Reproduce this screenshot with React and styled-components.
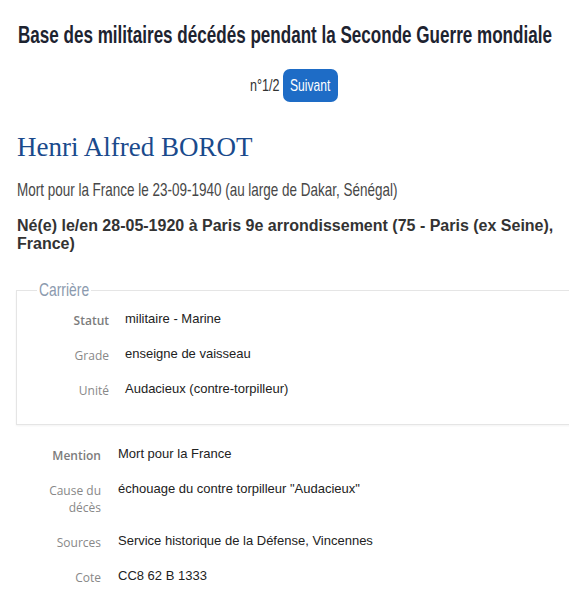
import React, { useLayoutEffect, useRef, useState } from "react";
import styled, { createGlobalStyle } from "styled-components";

const GlobalStyle = createGlobalStyle`
  html, body {
    margin: 0;
    padding: 0;
    background: #ffffff;
    overflow: hidden;
  }
  body {
    font-family: "Liberation Sans", Arial, sans-serif;
    color: #222;
  }
`;

// no condensed face is installed, so narrow Arial-metric text horizontally
const SqueezeBox = styled.span`
  display: inline-block;
  white-space: nowrap;
  vertical-align: top;
`;

const SqueezeInner = styled.span`
  display: inline-block;
  transform: scaleX(${(p) => p.$scale});
  transform-origin: left center;
`;

const Squeeze = ({ scale = 0.71, children }) => {
  const ref = useRef(null);
  const [width, setWidth] = useState();

  useLayoutEffect(() => {
    if (ref.current) setWidth(ref.current.offsetWidth * scale);
  }, [scale, children]);

  return (
    <SqueezeBox style={{ width }}>
      <SqueezeInner ref={ref} $scale={scale}>
        {children}
      </SqueezeInner>
    </SqueezeBox>
  );
};

const Page = styled.main`
  width: 569px;
  height: 601px;
  padding: 0 0 0 17px;
  box-sizing: border-box;
  display: flex;
  flex-direction: column;
`;

const Title = styled.h1`
  margin: 20px 0 0 -17px;
  font-family: "Liberation Sans", Arial, sans-serif;
  font-size: 24px;
  font-weight: 700;
  color: #1d2330;
  line-height: 30px;
  text-align: center;
`;

const Pager = styled.div`
  display: flex;
  justify-content: center;
  align-items: center;
  gap: 3px;
  margin-top: 19px;
  padding-left: 2px;
`;

const PagerText = styled.span`
  font-family: "Liberation Sans", Arial, sans-serif;
  font-size: 17px;
  color: #333;
`;

const NextButton = styled.button`
  display: flex;
  justify-content: center;
  align-items: center;
  border: none;
  background: #1e6cc6;
  color: #fff;
  border-radius: 7px;
  width: 55px;
  height: 33px;
  padding: 0;
  font-family: "Liberation Sans", Arial, sans-serif;
  font-size: 17px;
`;

const Name = styled.h2`
  margin: 29px 0 0 0;
  font-family: "Liberation Serif", "DejaVu Serif", serif;
  font-weight: 400;
  font-size: 27px;
  line-height: 32px;
  color: #1a4a8c;
`;

const Subtitle = styled.p`
  margin: 16px 0 0 0;
  font-family: "Liberation Sans", Arial, sans-serif;
  font-size: 19px;
  line-height: 22px;
  color: #474747;
`;

const Birth = styled.p`
  margin: 16px 0 0 0;
  font-family: "Liberation Sans", Arial, sans-serif;
  font-weight: 700;
  font-size: 16px;
  line-height: 18px;
  color: #333;
  padding-right: 10px;
`;

const Fieldset = styled.fieldset`
  margin: 26px -4px 0 -1px;
  padding: 9px 0 25px 0;
  border: 1px solid #e5e5e5;
  border-right: none;
  box-shadow: 0 1px 2px rgba(0, 0, 0, 0.05);
`;

const Legend = styled.legend`
  margin-left: 20px;
  padding: 0 2px;
  font-family: "Liberation Sans", Arial, sans-serif;
  font-size: 19px;
  line-height: 22px;
  color: #8b9aae;
`;

const Rows = styled.dl`
  margin: 0;
  padding-left: ${(p) => p.$indent}px;
  display: grid;
  grid-template-columns: 60px 1fr;
  column-gap: ${(p) => p.$gap}px;
  row-gap: 16px;
`;

const Label = styled.dt`
  text-align: right;
  font-family: "Open Sans", "Liberation Sans", sans-serif;
  font-size: 12px;
  font-weight: ${(p) => (p.$strong ? 600 : 400)};
  color: ${(p) => (p.$strong ? "#7c7c7c" : "#888888")};
  line-height: 17px;
  padding-top: 2px;
`;

const Value = styled.dd`
  margin: 0;
  font-family: "Liberation Sans", Arial, sans-serif;
  font-size: 13px;
  line-height: 17px;
  color: #222;
`;

const Details = styled.div`
  margin-top: 20px;
`;

const career = [
  { label: "Statut", value: "militaire - Marine", strong: true },
  { label: "Grade", value: "enseigne de vaisseau" },
  { label: "Unité", value: "Audacieux (contre-torpilleur)" },
];

const details = [
  { label: "Mention", value: "Mort pour la France", strong: true },
  { label: "Cause du décès", value: 'échouage du contre torpilleur "Audacieux"' },
  { label: "Sources", value: "Service historique de la Défense, Vincennes" },
  { label: "Cote", value: "CC8 62 B 1333" },
];

const renderRows = (items) =>
  items.map((item) => (
    <React.Fragment key={item.label}>
      <Label $strong={item.strong}>{item.label}</Label>
      <Value>{item.value}</Value>
    </React.Fragment>
  ));

const App = () => {
  return (
    <>
      <GlobalStyle />
      <Page>
        <Title>
          <Squeeze scale={0.711}>
            Base des militaires décédés pendant la Seconde Guerre mondiale
          </Squeeze>
        </Title>
        <Pager>
          <PagerText>
            <Squeeze scale={0.74}>n°1/2</Squeeze>
          </PagerText>
          <NextButton>
            <Squeeze scale={0.71}>Suivant</Squeeze>
          </NextButton>
        </Pager>
        <Name>Henri Alfred BOROT</Name>
        <Subtitle>
          <Squeeze scale={0.709}>
            Mort pour la France le 23-09-1940 (au large de Dakar, Sénégal)
          </Squeeze>
        </Subtitle>
        <Birth>
          Né(e) le/en 28-05-1920 à Paris 9e arrondissement (75 - Paris (ex Seine), France)
        </Birth>
        <Fieldset>
          <Legend>
            <Squeeze scale={0.73}>Carrière</Squeeze>
          </Legend>
          <Rows $indent={32} $gap={16}>
            {renderRows(career)}
          </Rows>
        </Fieldset>
        <Details>
          <Rows $indent={24} $gap={17}>
            {renderRows(details)}
          </Rows>
        </Details>
      </Page>
    </>
  );
};

export default App;
